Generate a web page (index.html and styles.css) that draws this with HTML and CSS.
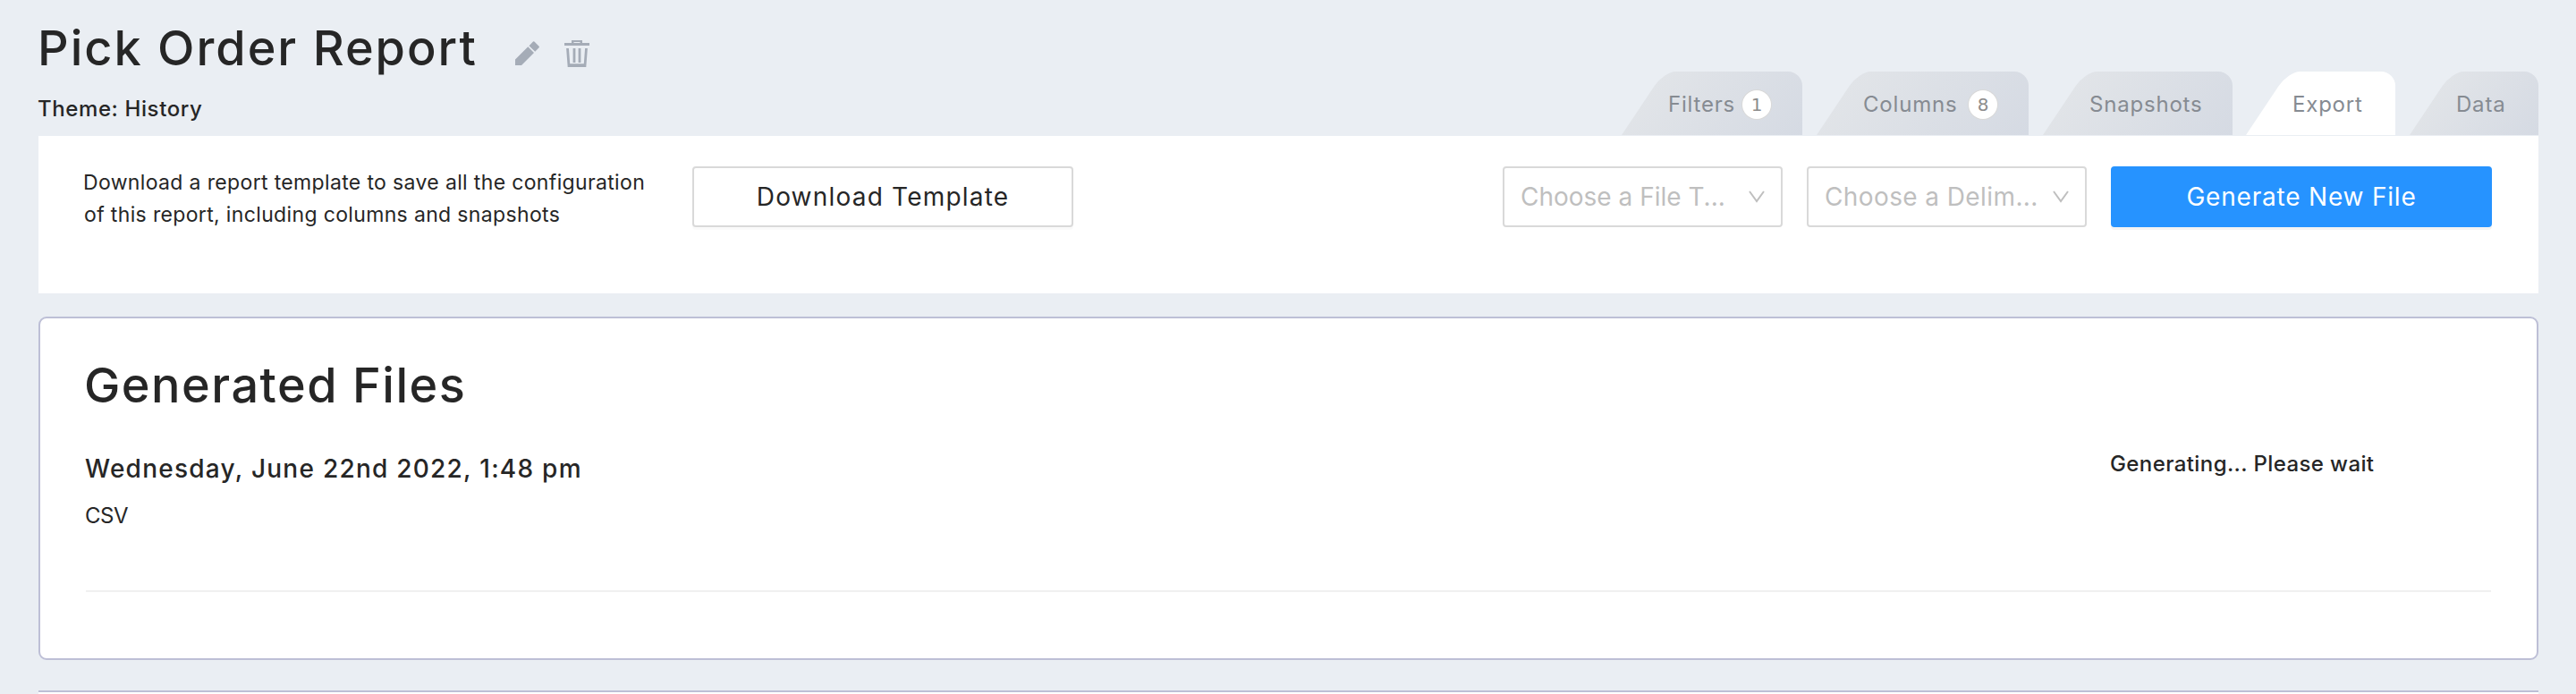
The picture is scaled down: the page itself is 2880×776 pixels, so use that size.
FILE: index.html
```html
<!DOCTYPE html>
<html lang="en">
<head>
    <meta charset="UTF-8">
    <meta name="viewport" content="width=device-width, initial-scale=1.0">
    <title>Pick Order Report</title>
    <link rel="stylesheet" href="styles.css">
</head>
<body>
    <div class="page">
        <!-- Header -->
        <header class="header">
            <div class="heading">
                <div class="title-row">
                    <h1 class="title">Pick Order Report</h1>
                    <svg class="icon-edit" width="28" height="28" viewBox="0 0 28 28">
                        <path d="M0 20.5 14.3 6.3 21 13 7 27H0zM15.5 5.2 20 .6q.7-.7 1.4 0l5.2 5.2q.7.7 0 1.4L22.2 11.800z" />
                    </svg>
                    <svg class="icon-trash" width="28" height="30" viewBox="0 0 28 30">
                        <path d="M0 3h8V0h12v3h8v3H0zM10.500 2v1h7V2z" fill-rule="evenodd" />
                        <path d="M3.500 9 5 28.500h18L24.500 9M5 27.700h18M11 9v16M17 9v16" fill="none" stroke="#a5acb7" stroke-width="2.800" />
                    </svg>
                </div>
                <div class="theme">Theme: History</div>
            </div>

            <!-- Tabs -->
            <nav class="tabs">
                <div class="tab filters"><span class="label">Filters</span><span class="count">1</span></div>
                <div class="tab columns"><span class="label">Columns</span><span class="count">8</span></div>
                <div class="tab snapshots"><span class="label">Snapshots</span></div>
                <div class="tab export active"><span class="label">Export</span></div>
                <div class="tab data"><span class="label">Data</span></div>
            </nav>
        </header>

        <!-- Export controls -->
        <section class="controls">
            <p class="description">Download a report template to save all the configuration<br>of this report, including columns and snapshots</p>
            <button class="button download">Download Template</button>
            <div class="select file-type">
                <span>Choose a File T...</span>
                <svg width="18" height="14" viewBox="0 0 18 14"><path d="M1 1l8 11 8-11" /></svg>
            </div>
            <div class="select delimiter">
                <span>Choose a Delim...</span>
                <svg width="18" height="14" viewBox="0 0 18 14"><path d="M1 1l8 11 8-11" /></svg>
            </div>
            <button class="button generate">Generate New File</button>
        </section>

        <!-- Generated files -->
        <section class="card files">
            <h2 class="files-title">Generated Files</h2>
            <div class="file">
                <div class="file-info">
                    <div class="file-date">Wednesday, June 22nd 2022, 1:48 pm</div>
                    <div class="file-type-name">CSV</div>
                </div>
                <div class="file-status">Generating... Please wait</div>
            </div>
        </section>

        <section class="next-card"></section>
    </div>
</body>
</html>
```
FILE: styles.css
```css
* {
    box-sizing: border-box;
}

body {
    margin: 0;
    height: 776px;
    overflow: hidden;
    background: #eaeef3;
    color: #262626;
    font-family: Inter, "Open Sans", sans-serif;
}

h1, h2, p {
    margin: 0;
}

.page {
    padding: 0 42px 0 43px;
}

/* Header */
.header {
    display: flex;
    justify-content: space-between;
    height: 152px;
}

.title-row {
    display: flex;
    height: 100px;
}

.title {
    width: 533px;
    padding-top: 20px;
    font-size: 54px;
    font-weight: 500;
    line-height: 68px;
    letter-spacing: 2px;
    text-indent: -1px;
    white-space: nowrap;
}

.icon-edit {
    margin-top: 46px;
    fill: #a5acb7;
}

.icon-trash {
    margin: 45px 0 0 27px;
    fill: #a5acb7;
}

.theme {
    font-size: 24px;
    font-weight: 500;
    line-height: 43px;
    letter-spacing: 0.6px;
    text-indent: -1px;
}

/* Tabs */
.tabs {
    display: flex;
    gap: 16px;
    padding-top: 80px;
}

.tab {
    position: relative;
    display: flex;
    align-items: center;
    height: 71px;
    padding: 2px 0 0 52px;
    overflow: hidden;
    border-radius: 0 16px 0 0;
    color: #868b92;
    font-size: 24px;
    letter-spacing: 0.8px;
}

/* slanted left edge */
.tab::before {
    content: "";
    position: absolute;
    inset: 0;
    border-radius: 13px 0 0 0 / 16px 0 0 0;
    background: linear-gradient(100deg, #e1e4e8, #d5dae3);
    transform: skewX(-33.7deg);
    transform-origin: bottom left;
}

.tab.active::before {
    background: #fff;
}

.tab .label,
.tab .count {
    position: relative;
}

.filters {
    width: 202px;
}

.columns {
    width: 237px;
}

.snapshots {
    width: 212px;
}

.export {
    width: 167px;
    margin-left: -1px;
}

.data {
    width: 144px;
}

.count {
    width: 32px;
    height: 32px;
    margin-left: auto;
    margin-right: 35px;
    border-radius: 50%;
    background: #fff;
    box-shadow: 0 0 0 1px #d9d9d9;
    color: #8c8c8c;
    font-family: "DejaVu Sans", sans-serif;
    font-size: 20px;
    line-height: 32px;
    letter-spacing: 0;
    text-align: center;
}

/* Export controls */
.controls {
    display: flex;
    height: 176px;
    padding: 34px 52px 0 51px;
    background: #fff;
}

.description {
    width: 680px;
    font-size: 23px;
    line-height: 36px;
    letter-spacing: 0.35px;
    text-indent: -1px;
    white-space: nowrap;
}

.button,
.select {
    height: 68px;
    border: 2px solid #d9d9d9;
    border-radius: 4px;
    background: #fff;
    font-size: 28px;
}

.button {
    width: 426px;
    padding: 0;
    box-shadow: 0 3px 0 rgba(0, 0, 0, 0.02);
    color: #262626;
    font-family: inherit;
    letter-spacing: 1.2px;
}

.generate {
    border-color: #2693ff;
    background: #2693ff;
    box-shadow: 0 3px 0 rgba(0, 0, 0, 0.045);
    color: #fff;
    letter-spacing: 0.8px;
}

.select {
    display: flex;
    align-items: center;
    justify-content: space-between;
    width: 313px;
    margin-right: 27px;
    padding: 0 18px;
    color: #bfbfbf;
    letter-spacing: 0;
    white-space: nowrap;
}

.select svg {
    fill: none;
    stroke: #bfbfbf;
    stroke-width: 2;
}

.file-type {
    margin-left: auto;
}

.delimiter {
    letter-spacing: 0.4px;
}

/* Generated files */
.card {
    border: 2px solid #bdbfd6;
    border-radius: 9px;
    background: #fff;
}

.files {
    height: 384px;
    margin-top: 26px;
    padding: 41px 51px 0;
}

.files-title {
    font-size: 54px;
    font-weight: 500;
    line-height: 67px;
    letter-spacing: 1.5px;
    text-indent: -2px;
}

.file {
    display: flex;
    justify-content: space-between;
    height: 198px;
    border-bottom: 2px solid #f0f0f0;
}

.file-date {
    margin-top: 40px;
    font-size: 28px;
    font-weight: 500;
    line-height: 40px;
    letter-spacing: 1.25px;
    text-indent: -1px;
}

.file-type-name {
    margin-top: 15px;
    font-size: 24px;
    line-height: 36px;
    letter-spacing: -0.5px;
    text-indent: -1px;
}

.file-status {
    width: 426px;
    margin-top: 37px;
    font-size: 24px;
    font-weight: 500;
    line-height: 36px;
    letter-spacing: 0.4px;
}

.next-card {
    height: 40px;
    margin-top: 34px;
    border-top: 2px solid #bdbfd6;
    background: #fff;
}
```
